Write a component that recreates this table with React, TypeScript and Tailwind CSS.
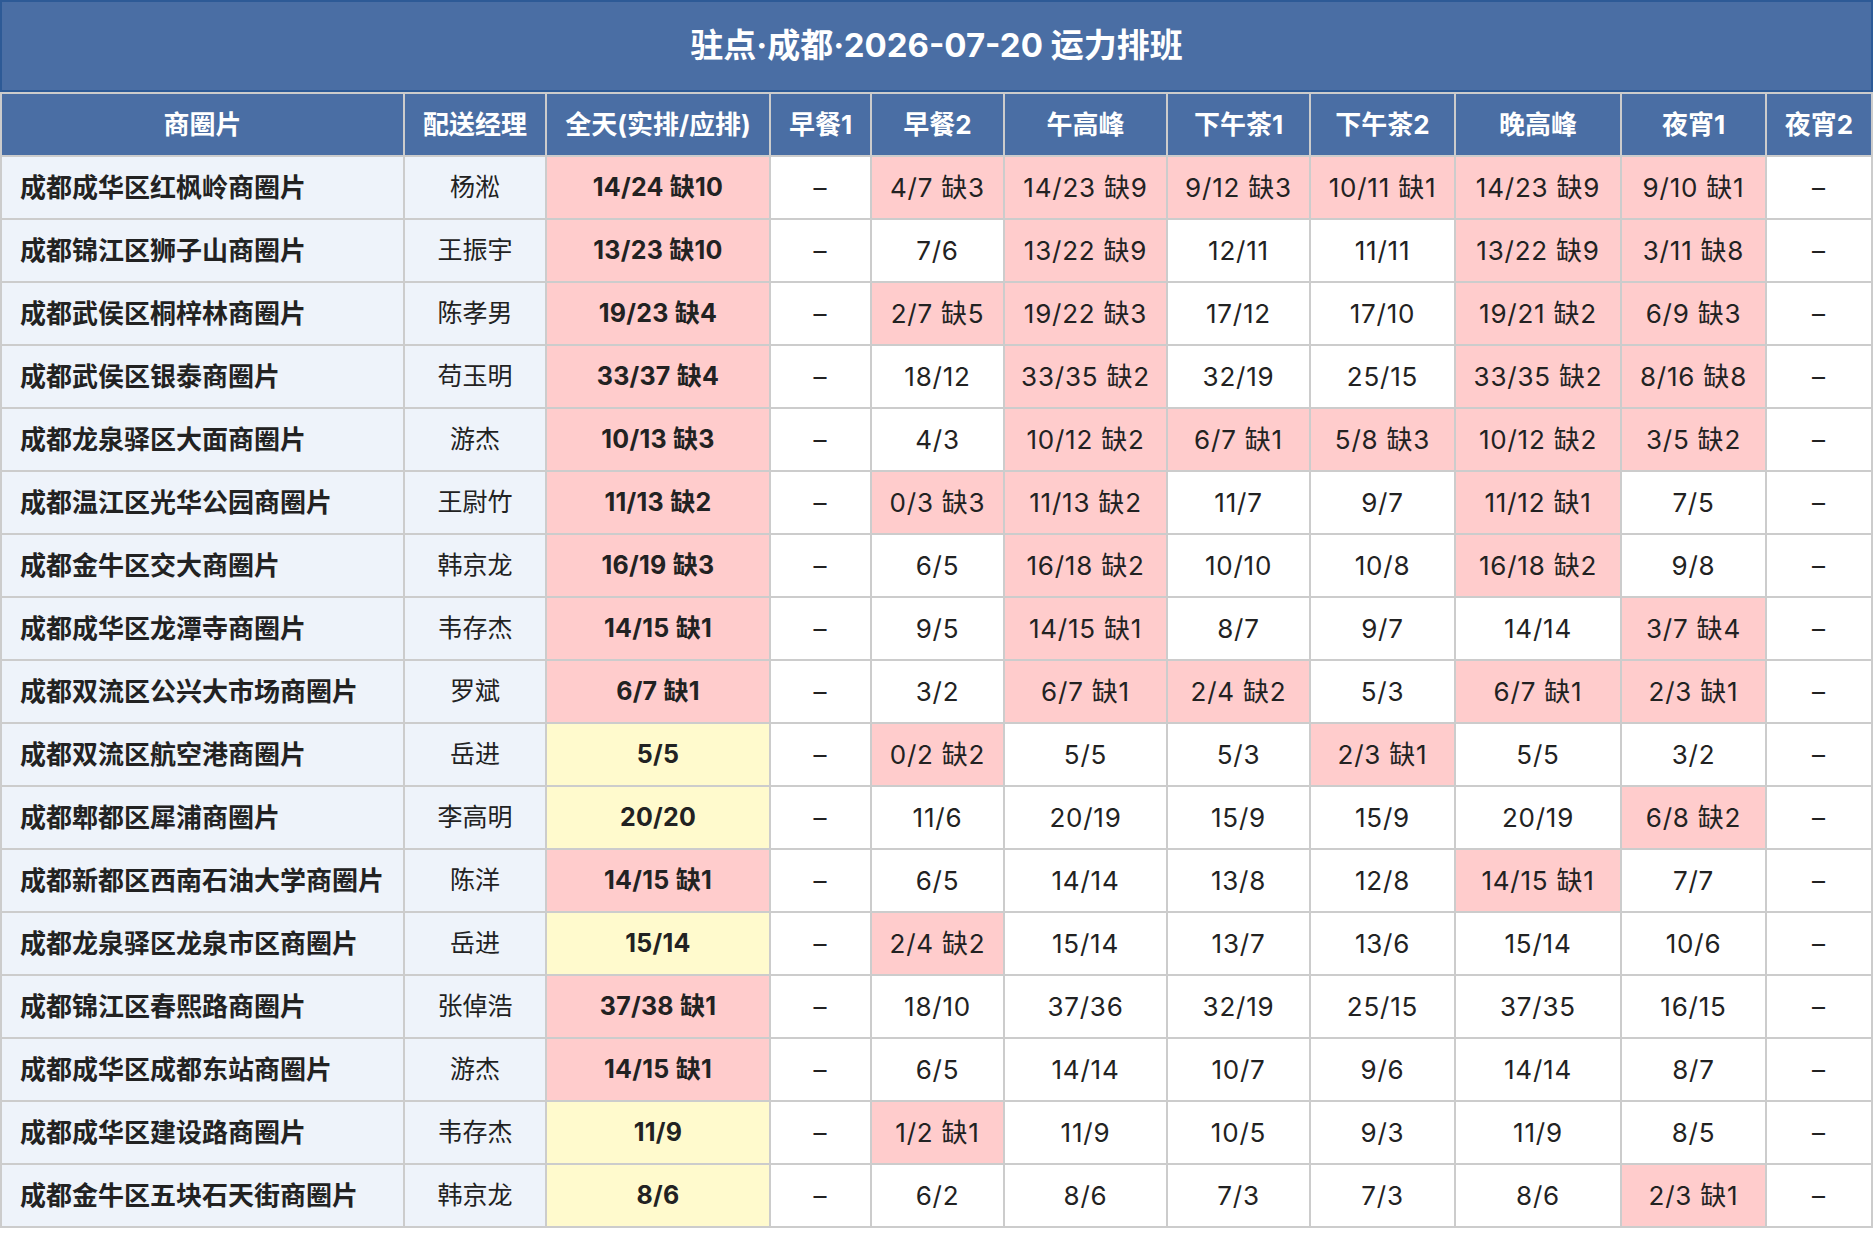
const COLUMNS = [
  "商圈片",
  "配送经理",
  "全天(实排/应排)",
  "早餐1",
  "早餐2",
  "午高峰",
  "下午茶1",
  "下午茶2",
  "晚高峰",
  "夜宵1",
  "夜宵2",
];

const WIDTHS = [
  "w-[403px]",
  "w-[142px]",
  "w-[224px]",
  "w-[101px]",
  "w-[133px]",
  "w-[163px]",
  "w-[143px]",
  "w-[145px]",
  "w-[166px]",
  "w-[145px]",
  "w-[106px]",
];

// [商圈片, 经理, 全天, 早餐1, 早餐2, 午高峰, 下午茶1, 下午茶2, 晚高峰, 夜宵1, 夜宵2]
const ROWS: string[][] = [
  ["成都成华区红枫岭商圈片", "杨淞", "14/24 缺10", "–", "4/7 缺3", "14/23 缺9", "9/12 缺3", "10/11 缺1", "14/23 缺9", "9/10 缺1", "–"],
  ["成都锦江区狮子山商圈片", "王振宇", "13/23 缺10", "–", "7/6", "13/22 缺9", "12/11", "11/11", "13/22 缺9", "3/11 缺8", "–"],
  ["成都武侯区桐梓林商圈片", "陈孝男", "19/23 缺4", "–", "2/7 缺5", "19/22 缺3", "17/12", "17/10", "19/21 缺2", "6/9 缺3", "–"],
  ["成都武侯区银泰商圈片", "苟玉明", "33/37 缺4", "–", "18/12", "33/35 缺2", "32/19", "25/15", "33/35 缺2", "8/16 缺8", "–"],
  ["成都龙泉驿区大面商圈片", "游杰", "10/13 缺3", "–", "4/3", "10/12 缺2", "6/7 缺1", "5/8 缺3", "10/12 缺2", "3/5 缺2", "–"],
  ["成都温江区光华公园商圈片", "王尉竹", "11/13 缺2", "–", "0/3 缺3", "11/13 缺2", "11/7", "9/7", "11/12 缺1", "7/5", "–"],
  ["成都金牛区交大商圈片", "韩京龙", "16/19 缺3", "–", "6/5", "16/18 缺2", "10/10", "10/8", "16/18 缺2", "9/8", "–"],
  ["成都成华区龙潭寺商圈片", "韦存杰", "14/15 缺1", "–", "9/5", "14/15 缺1", "8/7", "9/7", "14/14", "3/7 缺4", "–"],
  ["成都双流区公兴大市场商圈片", "罗斌", "6/7 缺1", "–", "3/2", "6/7 缺1", "2/4 缺2", "5/3", "6/7 缺1", "2/3 缺1", "–"],
  ["成都双流区航空港商圈片", "岳进", "5/5", "–", "0/2 缺2", "5/5", "5/3", "2/3 缺1", "5/5", "3/2", "–"],
  ["成都郫都区犀浦商圈片", "李高明", "20/20", "–", "11/6", "20/19", "15/9", "15/9", "20/19", "6/8 缺2", "–"],
  ["成都新都区西南石油大学商圈片", "陈洋", "14/15 缺1", "–", "6/5", "14/14", "13/8", "12/8", "14/15 缺1", "7/7", "–"],
  ["成都龙泉驿区龙泉市区商圈片", "岳进", "15/14", "–", "2/4 缺2", "15/14", "13/7", "13/6", "15/14", "10/6", "–"],
  ["成都锦江区春熙路商圈片", "张倬浩", "37/38 缺1", "–", "18/10", "37/36", "32/19", "25/15", "37/35", "16/15", "–"],
  ["成都成华区成都东站商圈片", "游杰", "14/15 缺1", "–", "6/5", "14/14", "10/7", "9/6", "14/14", "8/7", "–"],
  ["成都成华区建设路商圈片", "韦存杰", "11/9", "–", "1/2 缺1", "11/9", "10/5", "9/3", "11/9", "8/5", "–"],
  ["成都金牛区五块石天街商圈片", "韩京龙", "8/6", "–", "6/2", "8/6", "7/3", "7/3", "8/6", "2/3 缺1", "–"],
];

function cellClass(value: string, col: number) {
  if (col === 0) return "bg-[#eef3fa] text-left pl-[18px] font-bold text-[26px]";
  if (col === 1) return "bg-[#eef3fa] text-center text-[25px]";
  const short = value.includes("缺");
  if (col === 2) return `${short ? "bg-[#ffcccc]" : "bg-[#fffacd]"} text-center font-bold text-[25px] tracking-[0.01em]`;
  return `${short ? "bg-[#ffcccc]" : "bg-white"} text-center text-[26px] tracking-[0.03em]`;
}

export default function App() {
  return (
    <div className="min-h-screen bg-white font-[Inter,'Noto_Sans_CJK_SC',sans-serif] text-[#222]">
      <div className="h-[92px] flex items-center justify-center bg-[#4a6ea4] border-2 border-[#2d5a96]">
        <h1 className="text-[33px] font-bold text-white">驻点·成都·2026-07-20 运力排班</h1>
      </div>
      <table className="table-fixed border-collapse w-[1871px]">
        <colgroup>
          {WIDTHS.map((w, i) => (
            <col key={i} className={w} />
          ))}
        </colgroup>
        <thead>
          <tr>
            {COLUMNS.map((c) => (
              <th
                key={c}
                className="h-[63px] bg-[#4a6ea4] border-2 border-[#cccccc] text-white font-bold text-[26px] text-center whitespace-nowrap"
              >
                {c}
              </th>
            ))}
          </tr>
        </thead>
        <tbody>
          {ROWS.map((row) => (
            <tr key={row[0]}>
              {row.map((v, i) => (
                <td
                  key={i}
                  className={`h-[63px] border-2 border-[#cccccc] whitespace-nowrap ${cellClass(v, i)}`}
                >
                  {v}
                </td>
              ))}
            </tr>
          ))}
        </tbody>
      </table>
    </div>
  );
}
